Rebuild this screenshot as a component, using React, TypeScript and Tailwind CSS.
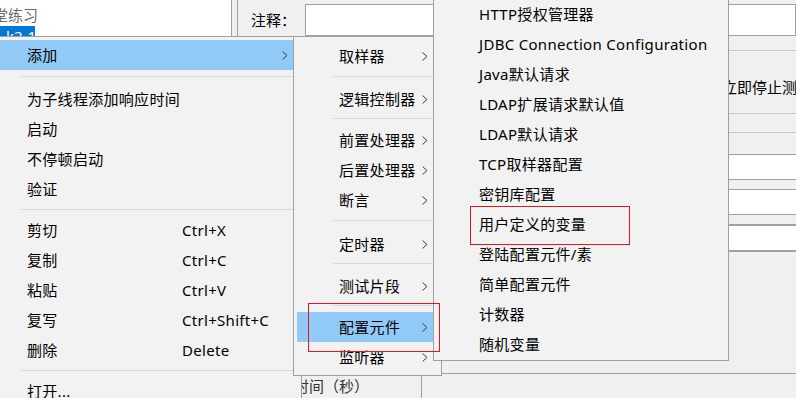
import React from 'react';

type Row =
  | { kind: 'item'; label: string; shortcut?: string; sub?: boolean; active?: boolean }
  | { kind: 'sep'; cls: string };

const item = (label: string, extra: Partial<{ shortcut: string; sub: boolean; active: boolean }> = {}): Row => ({
  kind: 'item',
  label,
  ...extra,
});
const sep = (cls: string): Row => ({ kind: 'sep', cls });

const Chevron = () => (
  <svg width="6" height="9" viewBox="0 0 6 9" className="block shrink-0">
    <path d="M0.6 0.6 L5 4.5 L0.6 8.4" fill="none" stroke="#3c3c3c" strokeWidth="1" />
  </svg>
);

const mainMenu: Row[] = [
  item('添加', { sub: true, active: true }),
  sep('h-[14px] pt-[6px]'),
  item('为子线程添加响应时间'),
  item('启动'),
  item('不停顿启动'),
  item('验证'),
  sep('h-[11px] pt-[5px]'),
  item('剪切', { shortcut: 'Ctrl+X' }),
  item('复制', { shortcut: 'Ctrl+C' }),
  item('粘贴', { shortcut: 'Ctrl+V' }),
  item('复写', { shortcut: 'Ctrl+Shift+C' }),
  item('删除', { shortcut: 'Delete' }),
  sep('h-[11px] pt-[5px]'),
  item('打开...'),
];

const addMenu: Row[] = [
  item('取样器', { sub: true }),
  sep('h-[13px] pt-[5px]'),
  item('逻辑控制器', { sub: true }),
  sep('h-[11px] pt-[4px]'),
  item('前置处理器', { sub: true }),
  item('后置处理器', { sub: true }),
  item('断言', { sub: true }),
  sep('h-[14px] pt-[5px]'),
  item('定时器', { sub: true }),
  sep('h-[12px] pt-[4px]'),
  item('测试片段', { sub: true }),
  sep('h-[11px] pt-[4px]'),
  item('配置元件', { sub: true, active: true }),
  item('监听器', { sub: true }),
];

const configMenu: Row[] = [
  'HTTP授权管理器',
  'JDBC Connection Configuration',
  'Java默认请求',
  'LDAP扩展请求默认值',
  'LDAP默认请求',
  'TCP取样器配置',
  '密钥库配置',
  '用户定义的变量',
  '登陆配置元件/素',
  '简单配置元件',
  '计数器',
  '随机变量',
].map((l) => item(l));

function MenuRows({ rows, labelWidth }: { rows: Row[]; labelWidth?: string }) {
  return (
    <>
      {rows.map((r, i) =>
        r.kind === 'sep' ? (
          <div key={i} className={r.cls}>
            <div className="ml-[36px] h-px bg-[#d7d7d7]" />
          </div>
        ) : (
          <div
            key={i}
            className={`flex h-[30px] items-center pl-[42px] pr-[10px] ${r.active ? 'bg-[#91c9f7]' : ''}`}
          >
            <span className={`whitespace-nowrap ${labelWidth ?? ''}`}>{r.label}</span>
            {r.shortcut && <span className="whitespace-nowrap">{r.shortcut}</span>}
            {r.sub && (
              <span className="ml-auto">
                <Chevron />
              </span>
            )}
          </div>
        )
      )}
    </>
  );
}

export default function App() {
  return (
    <div className="relative h-[398px] w-[796px] overflow-hidden bg-[#f0f0f0] font-['Noto_Sans','Noto_Sans_CJK_SC',sans-serif] text-[15px] text-black">
      {/* window behind the menus */}
      <div className="flex h-full">
        <div className="w-[232px] shrink-0 border-r border-[#a0a0a0] bg-white pt-[5px]">
          <div className="ml-[-22px] h-[21px] whitespace-nowrap leading-[20px] text-[#6b6b6b]">课堂练习</div>
          <div className="w-[35px] overflow-hidden whitespace-nowrap bg-[#0078d7] pl-[6px] leading-[20px] text-white">
            k2-1
          </div>
        </div>
        <div className="w-[5px] shrink-0" />
        <div className="flex min-w-0 flex-1 flex-col border-l border-[#a0a0a0]">
          <div className="mt-[4px] flex h-[32px] items-center">
            <span className="w-[67px] shrink-0 pl-[13px] leading-[32px]">注释：</span>
            <div className="h-[32px] flex-1 border border-[#a0a0a0] bg-white" />
          </div>
          <div className="mt-[14px] border-t border-[#c8c8c8]" />
          <div className="mt-[21px] h-[30px] whitespace-nowrap pl-[484px] leading-[30px]">立即停止测试</div>
          <div className="mt-[11px] h-[19px] border-t border-[#c8c8c8]" />
          <div className="h-[22px] border-t border-[#c8c8c8]" />
          <div className="h-[26px] border-y border-[#a0a0a0] bg-white" />
          <div className="h-[9px]" />
          <div className="h-[26px] border-y border-[#a0a0a0] bg-white" />
          <div className="h-[9px]" />
          <div className="h-[28px] border-y-2 border-[#a0a0a0] bg-white" />
          <div className="h-[122px]" />
          <div className="flex h-[25px] border-t border-[#a0a0a0]">
            <div className="w-[56px] shrink-0" />
            <div className="w-[128px] shrink-0 whitespace-nowrap border-r border-[#a0a0a0] leading-[24px] text-[#333]">
              时间（秒）
            </div>
          </div>
        </div>
      </div>

      {/* context menu */}
      <div className="absolute left-[-19px] top-[36px] h-[400px] w-[321px] border border-[#a0a0a0] bg-[#f2f2f2] px-[3px] pt-[3px] tracking-[0.3px]">
        <MenuRows rows={mainMenu} labelWidth="w-[155px]" />
      </div>

      {/* 添加 submenu */}
      <div className="absolute left-[293px] top-[36px] h-[340px] w-[149px] border border-[#a0a0a0] bg-[#f2f2f2] px-[3px] pt-[4px] tracking-[0.3px]">
        <MenuRows rows={addMenu} />
      </div>

      {/* 配置元件 submenu */}
      <div className="absolute left-[433px] top-[-5px] h-[366px] w-[296px] border border-[#a0a0a0] bg-[#f2f2f2] px-[3px] pt-[3px] tracking-[0.3px]">
        <MenuRows rows={configMenu} />
      </div>

      {/* red annotation boxes */}
      <div className="absolute left-[470px] top-[206px] h-[39px] w-[160px] border border-[#e8141c]" />
      <div className="absolute left-[308px] top-[303px] h-[49px] w-[132px] border border-[#e8141c]" />
    </div>
  );
}
